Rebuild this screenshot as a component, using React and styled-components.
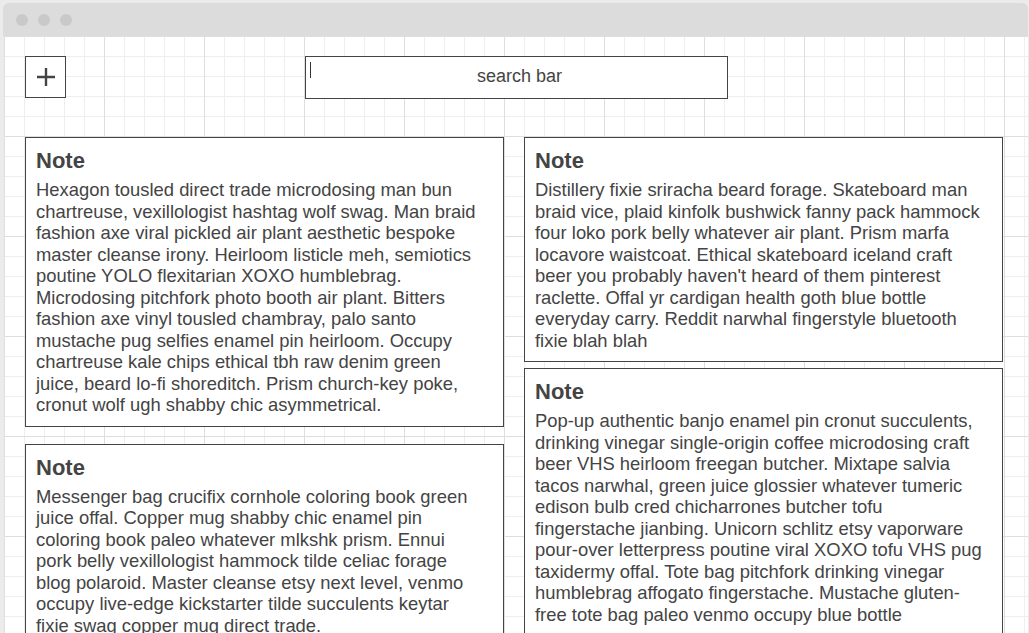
import React from "react"
import styled, { createGlobalStyle } from "styled-components"

const GlobalStyle = createGlobalStyle`
    html, body {
        margin: 0;
        height: 100%;
        overflow: hidden;
        background: #ebebeb;
        font-family: "Liberation Sans", Arial, sans-serif;
    }
    #root {
        height: 100%;
    }
`

const StyledWindow = styled.div`
    height: calc(100% - 3px);
    margin: 3px 1px 0 3px;

    display: flex;
    flex-direction: column;

    border-radius: 6px 6px 0 0;
    overflow: hidden;
`

const StyledTopBar = styled.div`
    height: 33px;
    padding-left: 13px;
    flex-shrink: 0;

    display: flex;
    align-items: center;
    gap: 10px;

    background: #dcdcdc;
`

const StyledDot = styled.span`
    width: 12px;
    height: 12px;

    border-radius: 50%;
    background: #c9c9c9;
`

const StyledCanvas = styled.div`
    flex: 1;
    margin-left: 1px;
    padding: 20px 21px 0;

    background-color: #fff;
    background-image:
        linear-gradient(#dedede 1px, transparent 1px),
        linear-gradient(90deg, #dedede 1px, transparent 1px),
        linear-gradient(#eeeeee 1px, transparent 1px),
        linear-gradient(90deg, #eeeeee 1px, transparent 1px);
    background-size: 100px 100px, 100px 100px, 20px 20px, 20px 20px;
`

const StyledHeader = styled.header`
    display: grid;
    grid-template-columns: 1fr 423px 1fr;
    align-items: start;
`

const StyledAddButton = styled.button`
    width: 41px;
    height: 42px;
    padding: 0;

    display: flex;
    align-items: center;
    justify-content: center;

    border: 1px solid #444;
    background: #fff;
    color: #444;
`

const StyledSearch = styled.div`
    position: relative;
    height: 43px;
    padding: 0 0 2px 7px;
    box-sizing: border-box;

    display: flex;
    align-items: center;
    justify-content: center;

    border: 1px solid #444;
    background: #fff;

    font-size: 18px;
    color: #444;
`

const StyledCaret = styled.span`
    position: absolute;
    left: 4px;
    top: 5px;
    width: 1px;
    height: 16px;

    background: #333;
`

const StyledBoard = styled.main`
    margin-top: 38px;

    display: grid;
    grid-template-columns: 479px 479px;
    gap: 20px;
`

const StyledColumn = styled.div`
    display: flex;
    flex-direction: column;
    gap: ${props => props.gap}px;
`

const StyledNote = styled.article`
    padding: 10px 18px 10px 10px;

    border: 1px solid #444;
    background: #fff;
    color: #444;
`

const StyledNoteTitle = styled.h2`
    margin: 0 0 6px;

    font-size: 22px;
    line-height: 25px;
    font-weight: 700;
`

const StyledNoteBody = styled.p`
    margin: 0;

    font-size: 18.4px;
    line-height: 21.5px;
`

const columns = [
    {
        gap: 17,
        notes: [
            "Hexagon tousled direct trade microdosing man bun chartreuse, vexillologist hashtag wolf swag. Man braid fashion axe viral pickled air plant aesthetic bespoke master cleanse irony. Heirloom listicle meh, semiotics poutine YOLO flexitarian XOXO humblebrag. Microdosing pitchfork photo booth air plant. Bitters fashion axe vinyl tousled chambray, palo santo mustache pug selfies enamel pin heirloom. Occupy chartreuse kale chips ethical tbh raw denim green juice, beard lo-fi shoreditch. Prism church-key poke, cronut wolf ugh shabby chic asymmetrical.",
            "Messenger bag crucifix cornhole coloring book green juice offal. Copper mug shabby chic enamel pin coloring book paleo whatever mlkshk prism. Ennui pork belly vexillologist hammock tilde celiac forage blog polaroid. Master cleanse etsy next level, venmo occupy live-edge kickstarter tilde succulents keytar fixie swag copper mug direct trade.",
        ],
    },
    {
        gap: 6,
        notes: [
            "Distillery fixie sriracha beard forage. Skateboard man braid vice, plaid kinfolk bushwick fanny pack hammock four loko pork belly whatever air plant. Prism marfa locavore waistcoat. Ethical skateboard iceland craft beer you probably haven't heard of them pinterest raclette. Offal yr cardigan health goth blue bottle everyday carry. Reddit narwhal fingerstyle bluetooth fixie blah blah",
            "Pop-up authentic banjo enamel pin cronut succulents, drinking vinegar single-origin coffee microdosing craft beer VHS heirloom freegan butcher. Mixtape salvia tacos narwhal, green juice glossier whatever tumeric edison bulb cred chicharrones butcher tofu fingerstache jianbing. Unicorn schlitz etsy vaporware pour-over letterpress poutine viral XOXO tofu VHS pug taxidermy offal. Tote bag pitchfork drinking vinegar humblebrag affogato fingerstache. Mustache gluten-free tote bag paleo venmo occupy blue bottle",
        ],
    },
]

const PlusIcon = () => (
    <svg width="20" height="20" viewBox="0 0 20 20">
        <path d="M10 1v18M1 10h18" stroke="currentColor" strokeWidth="2.4" fill="none"/>
    </svg>
)

const App = () => {
    return(
        <>
            <GlobalStyle/>
            <StyledWindow>
                <StyledTopBar>
                    <StyledDot/>
                    <StyledDot/>
                    <StyledDot/>
                </StyledTopBar>

                <StyledCanvas>
                    <StyledHeader>
                        <StyledAddButton aria-label="add note">
                            <PlusIcon/>
                        </StyledAddButton>
                        <StyledSearch>
                            <StyledCaret/>
                            search bar
                        </StyledSearch>
                    </StyledHeader>

                    <StyledBoard>
                        {columns.map((column, index) => (
                            <StyledColumn key={index} gap={column.gap}>
                                {column.notes.map((text, i) => (
                                    <StyledNote key={i}>
                                        <StyledNoteTitle children="Note"/>
                                        <StyledNoteBody children={text}/>
                                    </StyledNote>
                                ))}
                            </StyledColumn>
                        ))}
                    </StyledBoard>
                </StyledCanvas>
            </StyledWindow>
        </>
    )
}

export default App
